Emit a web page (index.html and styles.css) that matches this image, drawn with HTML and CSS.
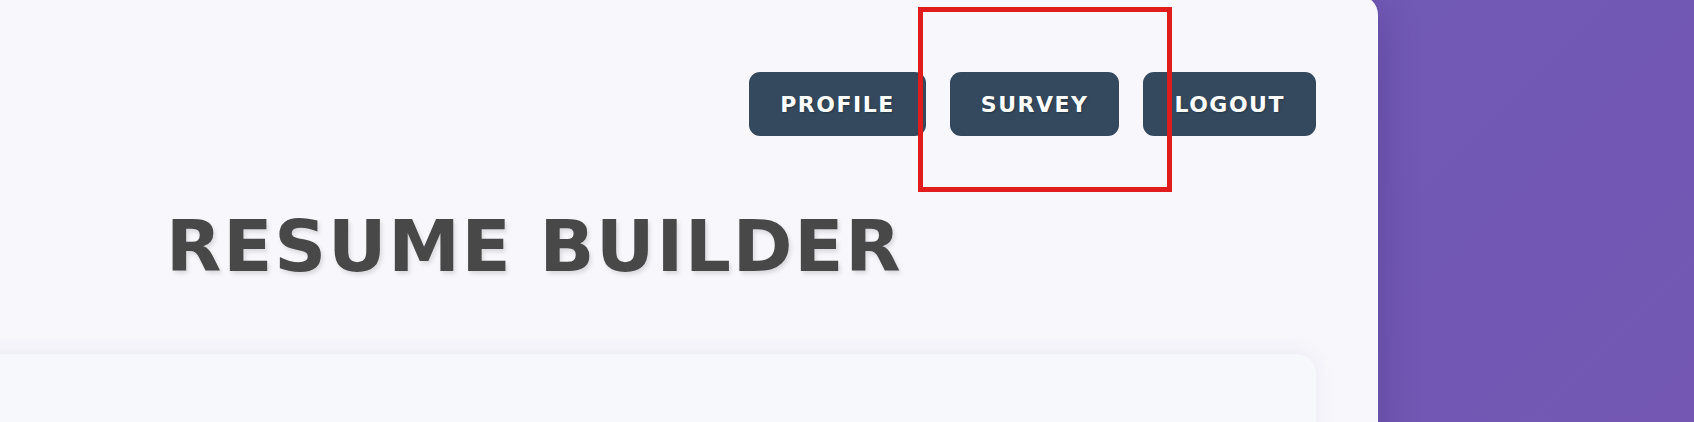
FILE: index.html
```html
<!DOCTYPE html>
<html lang="en">
<head>
<meta charset="utf-8">
<title>Resume Builder</title>
<link rel="stylesheet" href="styles.css">
</head>
<body>
<div class="page">
  <main class="card">
    <nav class="nav">
      <button class="nav-btn">PROFILE</button>
      <button class="nav-btn">SURVEY</button>
      <button class="nav-btn">LOGOUT</button>
    </nav>
    <h1 class="title">RESUME BUILDER</h1>
    <section class="panel"></section>
  </main>
</div>
<div class="highlight"></div>
</body>
</html>
```

FILE: styles.css
```css
html, body {
  margin: 0;
  padding: 0;
  height: 100%;
  overflow: hidden;
}
body {
  background: linear-gradient(135deg, #6c5dba 0%, #7357b3 100%);
  font-family: "DejaVu Sans", Verdana, sans-serif;
}
.page {
  display: flex;
  height: 100%;
}
.card {
  flex: 0 0 auto;
  width: 1478px;
  margin-left: -100px;
  margin-top: -5px;
  height: 600px;
  box-sizing: border-box;
  padding: 77px 62px 0 62px;
  background: #f8f7fc;
  border-radius: 20px;
  box-shadow: 0 10px 40px rgba(40, 20, 80, 0.25);
  display: flex;
  flex-direction: column;
}
.nav {
  display: flex;
  justify-content: flex-end;
  gap: 24px;
}
.nav-btn {
  height: 64px;
  padding: 0 31px;
  border: none;
  border-radius: 11px;
  background: #34495e;
  color: #ffffff;
  font-family: "DejaVu Sans", Verdana, sans-serif;
  font-weight: bold;
  font-size: 22px;
  letter-spacing: 1.5px;
  text-shadow: 1px 1px 2px rgba(0, 0, 0, 0.25);
}
.title {
  margin: 68px 0 0 204px;
  font-size: 72px;
  line-height: normal;
  font-weight: bold;
  letter-spacing: 1.8px;
  color: #484848;
  text-shadow: 2px 3px 4px rgba(0, 0, 0, 0.12);
}
.panel {
  margin-top: 66px;
  height: 300px;
  background: #f7f8fb;
  border-radius: 20px;
  box-shadow: 0 -2px 20px rgba(60, 50, 100, 0.07);
}
.highlight {
  position: absolute;
  left: 918px;
  top: 7px;
  width: 254px;
  height: 185px;
  box-sizing: border-box;
  border: 5px solid #e01c1c;
  pointer-events: none;
}
```
